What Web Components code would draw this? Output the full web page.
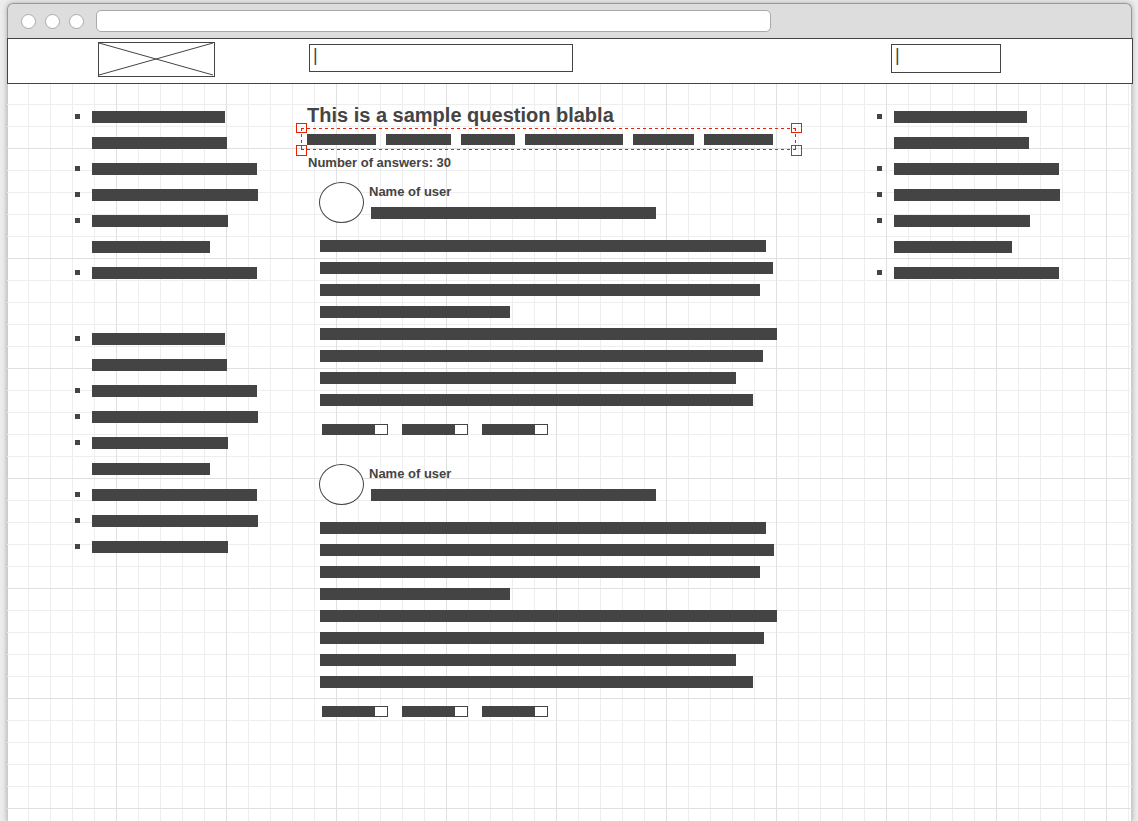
<!DOCTYPE html>
<html lang="en">
<head>
<meta charset="utf-8">
<title>Question page wireframe</title>
<style>
  :root { --ink: #444; --accent: #e62200; --columns: 221px 1fr 254px; }
  body { margin: 0; background: #ececec; color: var(--ink); font-family: "Liberation Sans", Arial, sans-serif; }
</style>
</head>
<body>
<wire-window>
  <wire-header slot="header"></wire-header>
  <nav slot="left" aria-label="Topics">
    <wire-list rows="133* 135 165* 166* 136* 118 165*"></wire-list>
    <wire-list rows="133* 135 165* 166* 136* 118 165* 166* 136*"></wire-list>
  </nav>
  <wire-question>
    <span slot="title">This is a sample question blabla</span>
    <span slot="count">Number of answers: 30</span>
    <wire-answer lines="446 453 440 190 457 443 416 433">Name of user</wire-answer>
    <wire-answer lines="446 454 440 190 457 444 416 433">Name of user</wire-answer>
  </wire-question>
  <nav slot="right" aria-label="Related">
    <wire-list rows="133* 135 165* 166* 136* 118 165*"></wire-list>
  </nav>
</wire-window>

<script>
class WireElement extends HTMLElement {
  render(html) {
    this.attachShadow({ mode: "open" }).innerHTML = html;
  }
}

customElements.define("wire-window", class extends WireElement {
  connectedCallback() {
    this.render(`<style>
      :host { display: flex; flex-direction: column; box-sizing: border-box; min-height: 100vh; padding: 3px 6px 0 7px; }
      .frame { flex: 1; display: flex; flex-direction: column; border-radius: 6px 6px 0 0; box-shadow: 0 0 5px rgba(0,0,0,.3); }
      .chrome { display: flex; align-items: center; gap: 9px; box-sizing: border-box; height: 35px; padding: 0 360px 0 13px;
        background: #ddd; border: 1px solid #999; border-bottom: 0; border-radius: 6px 6px 0 0; }
      .dot { flex: none; box-sizing: border-box; width: 15px; height: 15px; border: 1px solid #aaa; border-radius: 50%; background: #fff; }
      input { flex: 1; min-width: 0; box-sizing: border-box; height: 22px; margin-left: 3px; padding: 0 6px; border: 1px solid #aaa; border-radius: 5px;
        background: #fff; outline: 0; color: inherit; font: 13px "Liberation Sans", sans-serif; }
      main { flex: 1; display: grid; grid-template-columns: var(--columns); align-items: start; padding: 0 0 40px 67px;
        border: solid transparent; border-width: 0 1px;
        background:
          linear-gradient(#e0e0e0 1px, transparent 1px) 0 64px / 110px 110px border-box,
          linear-gradient(90deg, #e0e0e0 1px, transparent 1px) 109px 0 / 110px 110px border-box,
          linear-gradient(#eee 1px, transparent 1px) 0 20px / 22px 22px border-box,
          linear-gradient(90deg, #eee 1px, transparent 1px) 21px 0 / 22px 22px border-box,
          linear-gradient(#fff, #fff) padding-box,
          #ccc; }
      ::slotted(nav) { display: grid; gap: 54px; padding-top: 27px; }
    </style>
    <div class="frame">
      <div class="chrome"><span class="dot"></span><span class="dot"></span><span class="dot"></span><input type="text" aria-label="Address"></div>
      <slot name="header"></slot>
      <main><slot name="left"></slot><slot></slot><slot name="right"></slot></main>
    </div>`);
  }
});

customElements.define("wire-header", class extends WireElement {
  connectedCallback() {
    this.render(`<style>
      :host { display: grid; grid-template-columns: var(--columns); align-items: start; box-sizing: border-box; height: 46px;
        margin-right: -1px; padding: 3px 0 0 67px; border: 1px solid var(--ink); background: #fff; }
      svg { display: block; box-sizing: border-box; width: 117px; height: 35px; margin-left: 23px; border: 1px solid var(--ink); }
      input { display: block; box-sizing: border-box; height: 28px; margin: 2px 0 0 13px; padding: 0 3px 6px; border: 1px solid var(--ink); border-radius: 0;
        background: #fff; outline: 0; color: var(--ink); font: 18px/20px "Liberation Sans", sans-serif; }
      .search { width: 264px; }
      .login { width: 110px; height: 29px; padding-bottom: 7px; }
    </style>
    <svg viewBox="0 0 115 33" role="img" aria-label="Logo"><path d="M0 0 114 32M0 32 114 0" fill="none" stroke="#444"/></svg>
    <input class="search" type="text" aria-label="Search" value="|">
    <input class="login" type="text" aria-label="Account" value="|">`);
  }
});

customElements.define("wire-list", class extends WireElement {
  connectedCallback() {
    const rows = this.getAttribute("rows").split(" ").map(row =>
      `<li class="${row.endsWith("*") ? "marked" : ""}"><span style="width:${parseInt(row)}px"></span></li>`).join("");
    this.render(`<style>
      :host { display: block; }
      ul { display: grid; gap: 14px; margin: 0; padding: 0; list-style: none; }
      li { display: flex; gap: 12px; height: 12px; }
      li::before { content: ""; width: 5px; height: 5px; margin-top: 3px; }
      .marked::before { background: var(--ink); }
      span { background: var(--ink); }
    </style><ul>${rows}</ul>`);
  }
});

customElements.define("wire-selection", class extends WireElement {
  connectedCallback() {
    this.render(`<style>
      :host { position: relative; display: flex; gap: 10px; box-sizing: border-box; width: 495px; height: 22px; padding: 6px;
        --h: linear-gradient(90deg, var(--accent) 50%, transparent 50%);
        --v: linear-gradient(var(--accent) 50%, transparent 50%);
        background: var(--h) 0 0 / 6px 1px repeat-x, var(--h) 0 100% / 6px 1px repeat-x,
          var(--v) 0 0 / 1px 6px repeat-y, var(--v) 100% 0 / 1px 6px repeat-y; }
      i { position: absolute; box-sizing: border-box; width: 11px; height: 11px; border: 1px solid var(--accent); }
      .t { top: -5px; height: 10px; } .b { bottom: -6px; } .l { left: -5px; } .r { right: -6px; }
    </style><slot></slot><i class="t l"></i><i class="t r"></i><i class="b l"></i><i class="b r"></i>`);
  }
});

customElements.define("wire-question", class extends WireElement {
  connectedCallback() {
    const tags = [69, 65, 54, 98, 61, 69].map(w => `<span class="tag" style="width:${w}px"></span>`).join("");
    this.render(`<style>
      :host { display: block; padding-top: 19px; }
      h1 { margin: 0 0 0 11px; font-size: 20px; line-height: 25px; }
      wire-selection { margin-left: 5px; }
      .tag { height: 11px; background: var(--ink); }
      h2 { margin: 5px 0 0 12px; font-size: 13px; line-height: 16px; }
      .answers { display: grid; gap: 29px; margin: 11px 0 0 23px; }
    </style>
    <h1><slot name="title"></slot></h1>
    <wire-selection>${tags}</wire-selection>
    <h2><slot name="count"></slot></h2>
    <div class="answers"><slot></slot></div>`);
  }
});

customElements.define("wire-answer", class extends WireElement {
  connectedCallback() {
    const lines = this.getAttribute("lines").split(" ").map(w => `<span style="width:${w}px"></span>`).join("");
    const actions = "<span></span>".repeat(3);
    this.render(`<style>
      :host { display: block; }
      header { display: flex; gap: 5px; height: 41px; }
      .avatar { box-sizing: border-box; width: 45px; height: 41px; border: 1px solid var(--ink); border-radius: 50%; background: #fff; }
      h3 { margin: 2px 0 7px; font-size: 13px; line-height: 16px; }
      .bio { width: 285px; height: 12px; margin-left: 2px; background: var(--ink); }
      .text { display: grid; gap: 10px; margin: 17px 0 18px 1px; }
      .text span { height: 12px; background: var(--ink); }
      .actions { display: flex; gap: 14px; margin-left: 3px; }
      .actions span { box-sizing: border-box; width: 66px; height: 11px; border: 1px solid var(--ink); border-left-width: 53px; background: #fff; }
    </style>
    <header><div class="avatar"></div><div><h3><slot></slot></h3><div class="bio"></div></div></header>
    <div class="text">${lines}</div>
    <div class="actions">${actions}</div>`);
  }
});
</script>
</body>
</html>
